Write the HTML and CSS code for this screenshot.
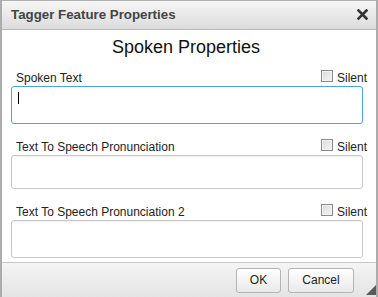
FILE: index.html
```html
<!DOCTYPE html>
<html>
<head>
<meta charset="utf-8">
<title>Tagger Feature Properties</title>
<link rel="stylesheet" href="styles.css">
</head>
<body>
<div class="dialog">
  <div class="titlebar">
    <span class="title">Tagger Feature Properties</span>
    <span class="close" aria-label="close">
      <svg width="11" height="11" viewBox="0 0 11 11"><path d="M1.5 1.5 L9.5 9.5 M9.5 1.5 L1.5 9.5" stroke="#333" stroke-width="2.6" stroke-linecap="square" fill="none"/></svg>
    </span>
  </div>
  <div class="content">
    <h2 class="heading">Spoken Properties</h2>
    <div class="field first">
      <div class="row"><span class="label">Spoken Text</span><span class="silent"><span class="cb"></span>Silent</span></div>
      <div class="box focused tall"><span class="caret"></span></div>
    </div>
    <div class="field">
      <div class="row"><span class="label">Text To Speech Pronunciation</span><span class="silent"><span class="cb"></span>Silent</span></div>
      <div class="box short"></div>
    </div>
    <div class="field">
      <div class="row"><span class="label">Text To Speech Pronunciation 2</span><span class="silent"><span class="cb"></span>Silent</span></div>
      <div class="box tall"></div>
    </div>
  </div>
  <div class="buttonpane">
    <span class="btn ok">OK</span>
    <span class="btn cancel">Cancel</span>
    <span class="grip"></span>
  </div>
</div>
</body>
</html>
```
FILE: styles.css
```css
html, body {
  margin: 0;
  padding: 0;
  background: #ffffff;
}
body {
  font-family: "Liberation Sans", Arial, sans-serif;
  color: #222;
}
.dialog {
  position: relative;
  width: 378px;
  height: 297px;
  box-sizing: border-box;
  border-top: 1px solid #b0b0b0;
  border-left: 2px solid #acacac;
  border-right: 2px solid #acacac;
  display: flex;
  flex-direction: column;
  background: #fff;
}
.titlebar {
  height: 28px;
  border-bottom: 1px solid #b8b8b8;
  background: linear-gradient(#f6f6f6, #dcdcdc);
  display: flex;
  align-items: center;
  justify-content: space-between;
  padding: 0 8px 0 9px;
}
.title {
  font-size: 13.3px;
  font-weight: bold;
  color: #444;
  line-height: 28px;
}
.close {
  display: flex;
  width: 11px;
  height: 11px;
  margin-top: -1px;
}
.content {
  flex: 1;
  padding: 0 9px 0 9px;
}
.heading {
  margin: 6px 6px 0 0;
  font-size: 18px;
  font-weight: normal;
  line-height: 22px;
  text-align: center;
  color: #111;
}
.field {
  margin-top: 16px;
}
.field.first {
  margin-top: 13px;
}
.row {
  display: flex;
  justify-content: space-between;
  align-items: flex-end;
  height: 15px;
  padding-left: 5px;
  font-size: 12px;
  line-height: 15px;
  color: #222;
}
.silent {
  display: flex;
  align-items: flex-end;
}
.cb {
  width: 10px;
  height: 10px;
  border: 1px solid #8a8a8a;
  background: linear-gradient(135deg, #dcdcdc, #f4f4f4);
  box-shadow: inset 0 0 0 1px #f2f2f2;
  margin: 0 4px 4px 0;
}
.box {
  box-sizing: border-box;
  width: 352px;
  border: 1px solid #c8c8c8;
  border-radius: 3px;
  background: #fff;
  box-shadow: inset 0 1px 1px rgba(0,0,0,0.06);
  padding: 5px 6px;
}
.box.tall { height: 38px; }
.box.short { height: 34px; }
.box.focused {
  border-color: #4aa3e6;
  box-shadow: none;
}
.caret {
  display: block;
  width: 1px;
  height: 12px;
  background: #000;
}
.buttonpane {
  position: relative;
  height: 34px;
  margin-top: 4px;
  border-top: 1px solid #c6c6c6;
  background: linear-gradient(#f4f4f4, #e4e4e4);
  display: flex;
  justify-content: flex-end;
  align-items: flex-start;
  padding: 5px 22px 0 0;
  gap: 7px;
}
.btn {
  box-sizing: border-box;
  height: 25px;
  border: 1px solid #b4b4b4;
  border-radius: 3px;
  background: linear-gradient(#ffffff, #e9e9e9);
  font-size: 12px;
  line-height: 23px;
  color: #222;
  text-align: center;
}
.btn.ok { width: 45px; }
.btn.cancel { width: 66px; }
.grip {
  position: absolute;
  right: 0;
  bottom: 2px;
  width: 0;
  height: 0;
  border-left: 10px solid transparent;
  border-bottom: 10px solid #5a5a5a;
}
```
